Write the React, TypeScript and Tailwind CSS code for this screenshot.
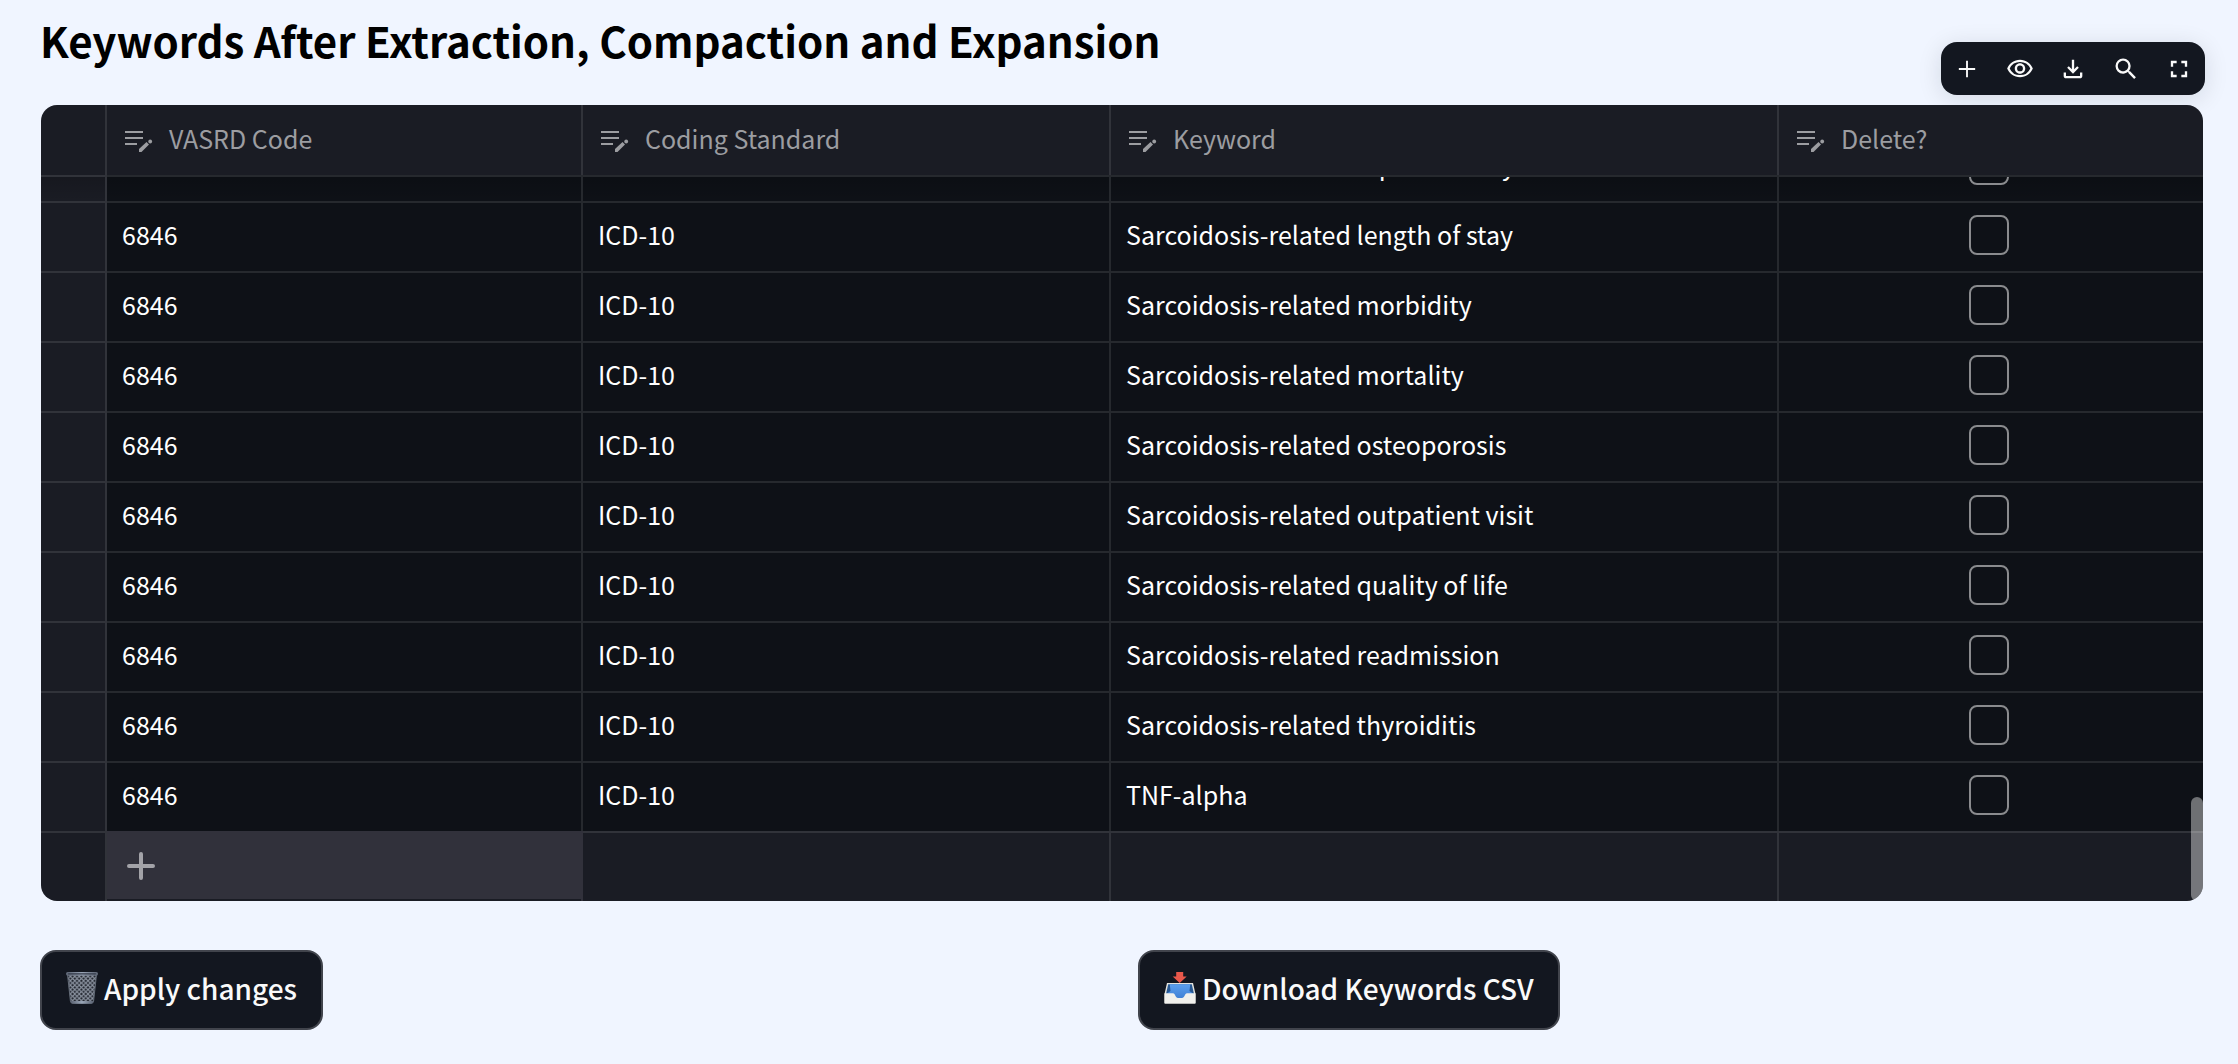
import type { ReactNode } from "react";

const keywords = [
  "Sarcoidosis-related length of stay",
  "Sarcoidosis-related morbidity",
  "Sarcoidosis-related mortality",
  "Sarcoidosis-related osteoporosis",
  "Sarcoidosis-related outpatient visit",
  "Sarcoidosis-related quality of life",
  "Sarcoidosis-related readmission",
  "Sarcoidosis-related thyroiditis",
  "TNF-alpha",
];

const columns = ["VASRD Code", "Coding Standard", "Keyword", "Delete?"];

const tools = [
  { label: "Add row", path: "M19 12.800h-6.200V19h-1.600v-6.200H5v-1.600h6.200V5h1.600v6.200H19z" },
  {
    label: "Show or hide columns",
    path: "M12 6a9.77 9.77 0 0 1 8.82 5.5 9.647 9.647 0 0 1-17.64 0A9.77 9.77 0 0 1 12 6m0-2C7 4 2.73 7.11 1 11.5 2.73 15.89 7 19 12 19s9.27-3.11 11-7.5C21.27 7.11 17 4 12 4zm0 5a2.5 2.5 0 0 1 0 5 2.5 2.5 0 0 1 0-5m0-2c-2.48 0-4.5 2.02-4.5 4.5S9.52 16 12 16s4.5-2.02 4.5-4.5S14.48 7 12 7z",
  },
  {
    label: "Download as CSV",
    path: "M18 15v3H6v-3H4v3c0 1.1.9 2 2 2h12c1.1 0 2-.9 2-2v-3h-2zm-1-4-1.41-1.41L13 12.17V4h-2v8.17L8.41 9.59 7 11l5 5 5-5z",
  },
  {
    label: "Search",
    path: "M15.5 14h-.79l-.28-.27A6.471 6.471 0 0 0 16 9.5 6.5 6.5 0 1 0 9.5 16c1.61 0 3.09-.59 4.23-1.57l.27.28v.79l5 4.99L20.49 19l-4.99-5zm-6 0C7.01 14 5 11.99 5 9.5S7.01 5 9.5 5 14 7.01 14 9.5 11.99 14 9.5 14z",
  },
  {
    label: "Fullscreen",
    path: "M7 14H5v5h5v-2H7v-3zm-2-4h2V7h3V5H5v5zm12 7h-3v2h5v-5h-2v3zM14 5v2h3v3h2V5h-5z",
  },
];

function EditListIcon() {
  return (
    <svg className="h-6 w-7 shrink-0" viewBox="0 0 28 24" fill="none" stroke="currentColor" aria-hidden="true">
      <path d="M0 4h18M0 10h18M0 16h12" strokeWidth="2" />
      <path d="M14 24v-3L21.500 14l2.500 2.500-7.500 7.500z" fill="currentColor" stroke="none" />
      <circle cx="25.200" cy="13.500" r="1.900" fill="currentColor" stroke="none" />
    </svg>
  );
}

function TrashIcon() {
  return (
    <svg className="h-8 w-8 shrink-0" viewBox="0 0 32 32" aria-hidden="true">
      <defs>
        <pattern id="mesh" width="4.400" height="4.400" patternUnits="userSpaceOnUse">
          <rect width="4.400" height="4.400" fill="#20242d" />
          <path d="M0 0l4.400 4.400M4.400 0L0 4.400" stroke="#8b93a0" strokeWidth="1.100" />
        </pattern>
        <linearGradient id="rim" x1="0" x2="1" y1="0" y2="0">
          <stop offset="0" stopColor="#596170" />
          <stop offset=".5" stopColor="#9aa6b8" />
          <stop offset="1" stopColor="#596170" />
        </linearGradient>
      </defs>
      <path d="M1.500 2.500h29L27.600 29q-.2 2-2 2H6.400q-1.800 0-2-2z" fill="url(#mesh)" stroke="#626a76" strokeWidth="1" />
      <path d="M4.400 29h23.200l-.3 1.600q-.2 1.100-1.800 1.100h-19q-1.600 0-1.800-1.100z" fill="url(#rim)" />
      <rect x="0" y="0" width="32" height="3.600" rx="1.500" fill="url(#rim)" />
      <rect x="2" y="1.200" width="28" height="1.200" rx=".6" fill="#343b49" />
    </svg>
  );
}

function InboxIcon() {
  return (
    <svg className="h-8 w-8 shrink-0" viewBox="0 0 32 32" aria-hidden="true">
      <defs>
        <linearGradient id="tray" x1="0" x2="0" y1="0" y2="1">
          <stop offset="0" stopColor="#5b9fee" />
          <stop offset="1" stopColor="#3f7fd4" />
        </linearGradient>
      </defs>
      <path d="M3 11h26l2.500 11v9.500H.5V22z" fill="#e4e3dd" />
      <path d="M4.200 12.200h23.600L30 22H2z" fill="#275791" />
      <path d="M5.800 12.200h20.400L25.500 19l4.300 3v5H2.200v-5l4.300-3z" fill="url(#tray)" />
      <path d="M.5 21.200H9c2.400 0 2.300 4.800 5 4.800h4c2.700 0 2.600-4.800 5-4.800h8.500v9.600q0 .7-.7.700H1.200q-.7 0-.7-.7z" fill="#f1f0ec" />
      <path d="M12.200 0h7v4.600h3.500L15.700 11 8.700 4.600h3.500z" fill="#e8584b" />
    </svg>
  );
}

function BodyCell({ children }: { children: ReactNode }) {
  return <td className="border-t-2 border-r-2 border-white/10 bg-[#0e1117] p-0 last:border-r-0">{children}</td>;
}

function KeywordRow({ keyword, clipped }: { keyword: string; clipped?: boolean }) {
  const frame = clipped
    ? "flex h-6 items-end overflow-hidden bg-linear-to-b from-black/15 to-transparent"
    : "flex h-[68px] items-end overflow-hidden";
  const text = "flex h-[68px] w-full shrink-0 items-center pb-1.5 pl-[15px] whitespace-nowrap";
  return (
    <tr>
      <td className="border-t-2 border-r-2 border-white/10 bg-[#1a1c24] p-0">
        <div className={frame} />
      </td>
      <BodyCell>
        <div className={frame}>{!clipped && <div className={text}>6846</div>}</div>
      </BodyCell>
      <BodyCell>
        <div className={frame}>{!clipped && <div className={text}>ICD-10</div>}</div>
      </BodyCell>
      <BodyCell>
        <div className={frame}>
          <div className={text}>{keyword}</div>
        </div>
      </BodyCell>
      <BodyCell>
        <div className={frame}>
          <div className="flex h-[68px] w-full shrink-0 items-center justify-center pr-1 pb-1">
            <input
              type="checkbox"
              aria-label={`Delete ${keyword}`}
              className="size-10 appearance-none rounded-lg border-2 border-[#8a8b8e] checked:bg-[#ff4b4b]"
            />
          </div>
        </div>
      </BodyCell>
    </tr>
  );
}

const actionButton =
  "flex h-20 items-center gap-1.5 rounded-2xl border-2 border-[#41444c] bg-[#131720] px-6 pb-1 font-medium whitespace-nowrap";

export default function App() {
  return (
    <main className="min-h-screen bg-[#f0f5ff] pr-[34px] pb-6 pl-10 font-['Noto_Sans_CJK_SC','Source_Sans_Pro',sans-serif] text-[25px] leading-9 text-[#fafafa]">
      <h2 className="pt-[10px] pb-[35px] text-[42px] leading-[60px] font-bold text-black">
        Keywords After Extraction, Compaction and Expansion
      </h2>

      <section className="relative px-px">
        <div className="absolute -top-[63px] -right-px flex h-[53px] w-[264px] items-center justify-between rounded-2xl bg-[#131720] px-3 shadow-[0_4px_24px_rgba(19,23,32,0.12)]">
          {tools.map((tool) => (
            <button key={tool.label} type="button" aria-label={tool.label}>
              <svg className="size-7" viewBox="0 0 24 24" fill="currentColor" aria-hidden="true">
                <path d={tool.path} />
              </svg>
            </button>
          ))}
        </div>

        <div className="relative overflow-hidden rounded-2xl bg-[#1a1c24]">
          <table className="w-full table-fixed border-separate border-spacing-0 text-left">
            <colgroup>
              <col className="w-[66px]" />
              <col className="w-[476px]" />
              <col className="w-[528px]" />
              <col className="w-[668px]" />
              <col />
            </colgroup>
            <thead>
              <tr className="text-[#9c9da1]">
                <td className="border-r-2 border-white/10" />
                {columns.map((name) => (
                  <th key={name} scope="col" className="border-r-2 border-white/10 p-0 font-normal last:border-r-0">
                    <div className="flex h-[70px] items-center gap-4 pl-[18px]">
                      <EditListIcon />
                      <span className="pb-1">{name}</span>
                    </div>
                  </th>
                ))}
              </tr>
            </thead>
            <tbody className="text-white">
              <KeywordRow keyword="Sarcoidosis-related inpatient stay" clipped />
              {keywords.map((keyword) => (
                <KeywordRow key={keyword} keyword={keyword} />
              ))}
              <tr>
                <td className="border-t-2 border-r-2 border-white/10" />
                <td className="border-t-2 border-r-2 border-[#31313b] p-0">
                  <div className="h-[68px] pb-0.5">
                    <button
                      type="button"
                      aria-label="Add a row"
                      className="flex h-full w-full items-center bg-[#31313b] pl-5 text-[#a3a3a8]"
                    >
                      <svg className="size-7" viewBox="0 0 28 28" stroke="currentColor" strokeWidth="4" strokeLinecap="round" aria-hidden="true">
                        <path d="M14 2v24M2 14h24" />
                      </svg>
                    </button>
                  </div>
                </td>
                <td className="border-t-2 border-r-2 border-white/10" />
                <td className="border-t-2 border-r-2 border-white/10" />
                <td className="border-t-2 border-white/10" />
              </tr>
            </tbody>
          </table>
          <div className="absolute right-0 bottom-0 h-[104px] w-3 rounded-md bg-white/40" />
        </div>
      </section>

      <div className="mt-[49px] grid grid-cols-2 gap-8 text-[28px]">
        <div>
          <button type="button" className={actionButton}>
            <TrashIcon />
            Apply changes
          </button>
        </div>
        <div>
          <button type="button" className={actionButton}>
            <InboxIcon />
            Download Keywords CSV
          </button>
        </div>
      </div>
    </main>
  );
}
